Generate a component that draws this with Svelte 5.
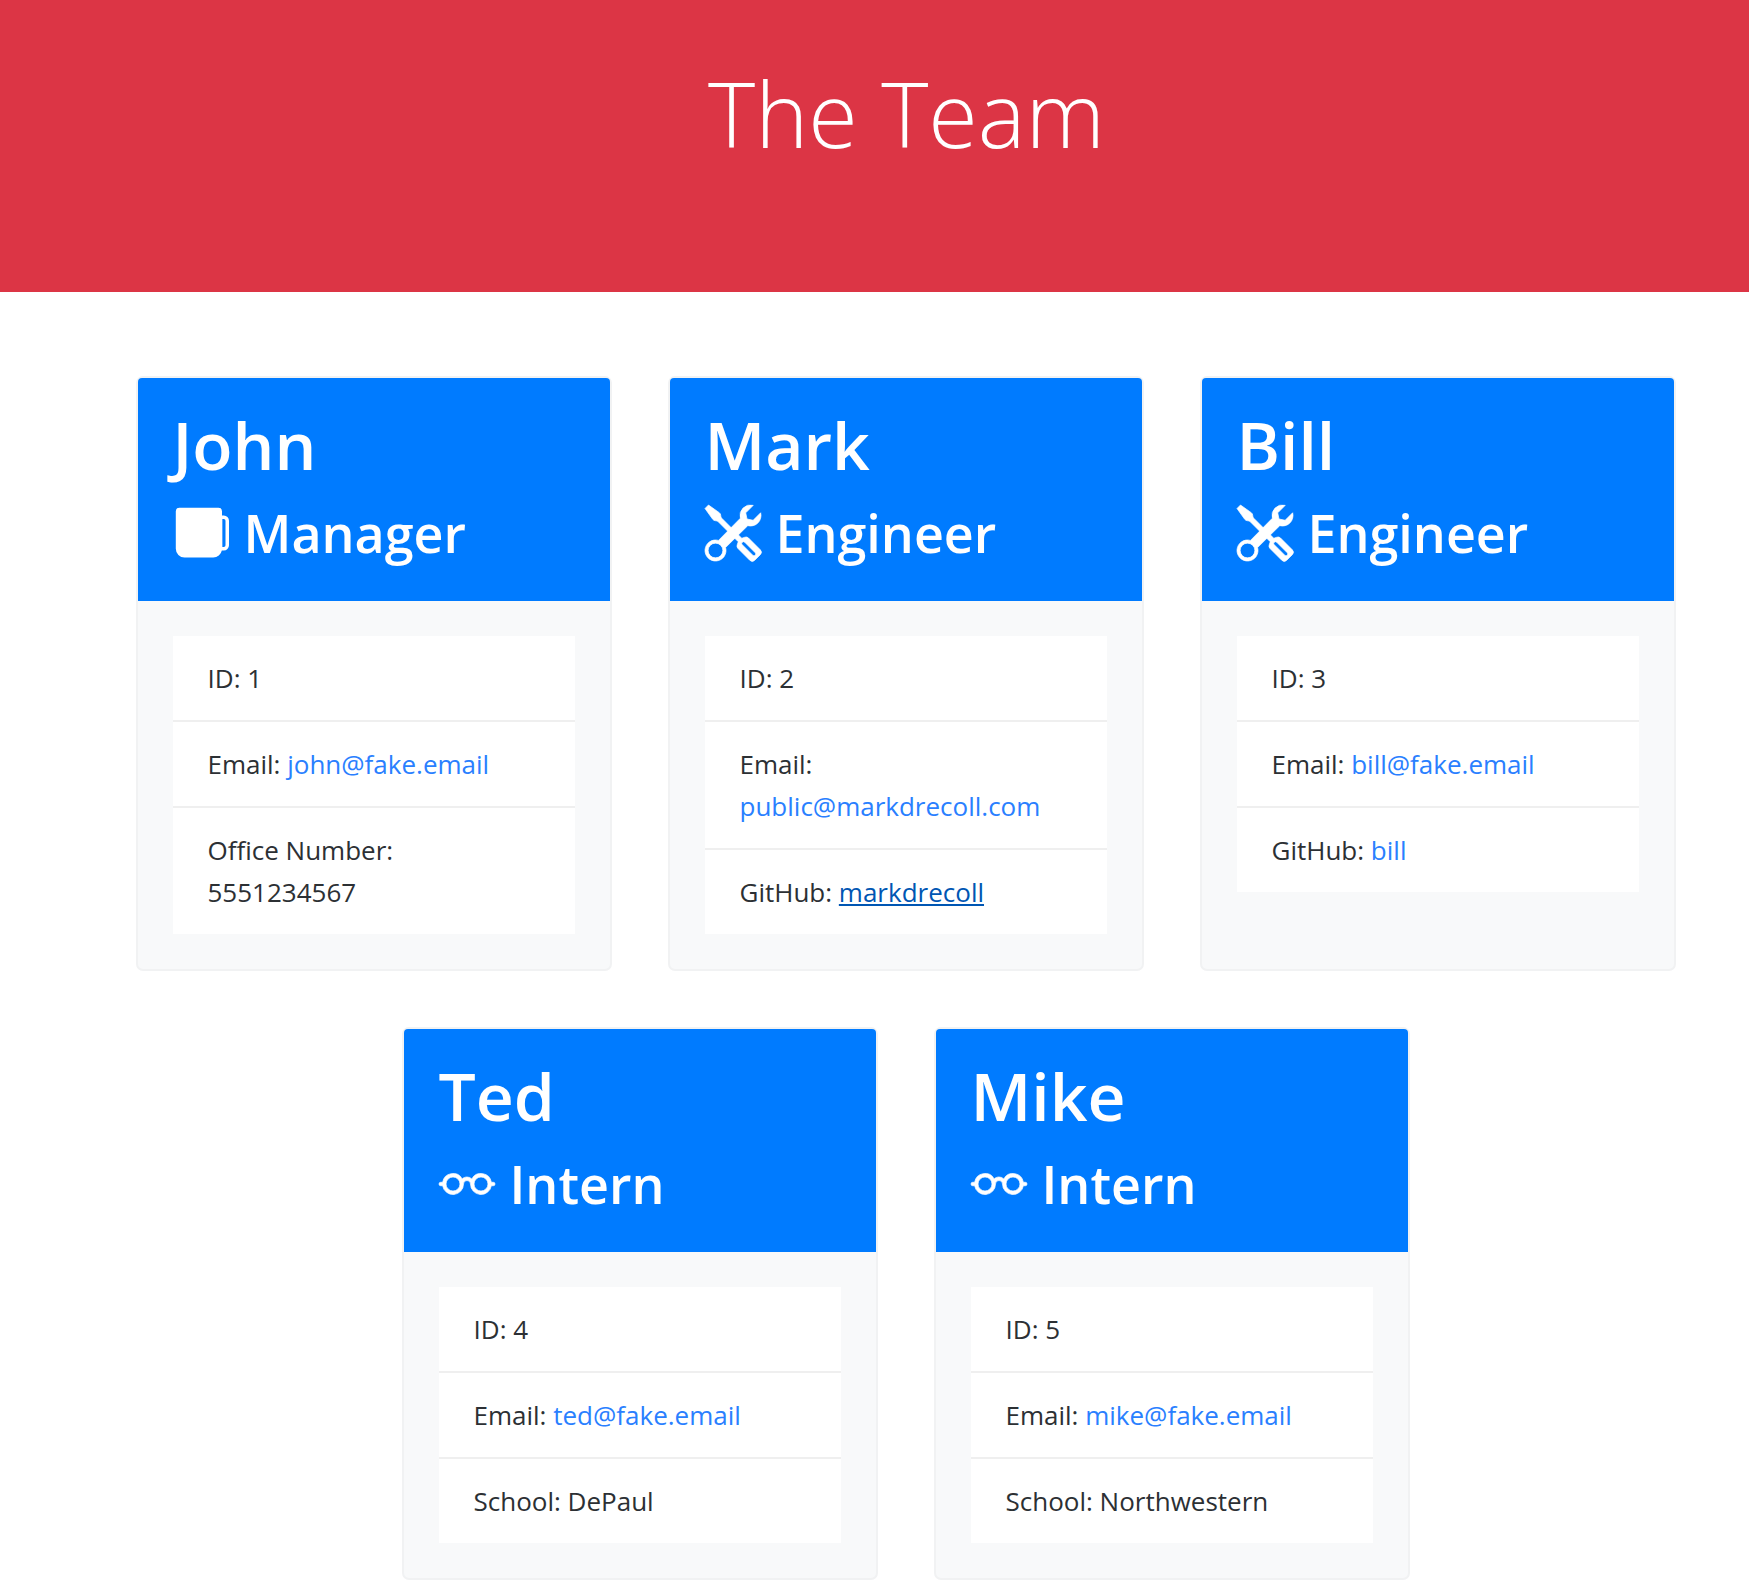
<script>
  const team = [
    { name: 'John', role: 'Manager', icon: 'mug', facts: [
      { label: 'ID', value: '1' },
      { label: 'Email', value: 'john@fake.email', href: 'mailto:john@fake.email' },
      { label: 'Office Number', value: '5551234567' } ] },
    { name: 'Mark', role: 'Engineer', icon: 'tools', facts: [
      { label: 'ID', value: '2' },
      { label: 'Email', value: 'public@markdrecoll.com', href: 'mailto:public@markdrecoll.com' },
      { label: 'GitHub', value: 'markdrecoll', href: '#markdrecoll', active: true } ] },
    { name: 'Bill', role: 'Engineer', icon: 'tools', facts: [
      { label: 'ID', value: '3' },
      { label: 'Email', value: 'bill@fake.email', href: 'mailto:bill@fake.email' },
      { label: 'GitHub', value: 'bill', href: '#bill' } ] },
    { name: 'Ted', role: 'Intern', icon: 'glasses', facts: [
      { label: 'ID', value: '4' },
      { label: 'Email', value: 'ted@fake.email', href: 'mailto:ted@fake.email' },
      { label: 'School', value: 'DePaul' } ] },
    { name: 'Mike', role: 'Intern', icon: 'glasses', facts: [
      { label: 'ID', value: '5' },
      { label: 'Email', value: 'mike@fake.email', href: 'mailto:mike@fake.email' },
      { label: 'School', value: 'Northwestern' } ] }
  ];
</script>

<div class="page">
  <header class="banner">
    <h1>The Team</h1>
  </header>

  <main class="team">
    {#each team as person}
      <article class="card">
        <div class="card-head">
          <h2>{person.name}</h2>
          <h3>
            <svg class="icon" viewBox="0 0 16 16" fill="currentColor" aria-hidden="true">
              {#if person.icon === 'mug'}
                <path d="M.8 1.800a1 1 0 0 1 1-1h11.200a1 1 0 0 1 1 1V3h.5A1.500 1.500 0 0 1 16 4.500v7a1.500 1.500 0 0 1-1.500 1.500h-.55a2.500 2.500 0 0 1-2.450 2h-8.200A2.500 2.500 0 0 1 .8 12.500V1.800zM14.100 12h.4a.5.5 0 0 0 .5-.5v-7a.5.5 0 0 0-.5-.5h-.4v8z" />
              {:else if person.icon === 'tools'}
                <path fill-rule="evenodd" stroke="currentColor" stroke-width=".2" d="M0 1l1-1 3.081 2.200a1 1 0 0 1 .419.815v.070a1 1 0 0 0 .293.708L10.500 9.500l.914-.305a1 1 0 0 1 1.023.242l3.356 3.356a1 1 0 0 1 0 1.414l-1.586 1.586a1 1 0 0 1-1.414 0l-3.356-3.356a1 1 0 0 1-.242-1.023L9.500 10.500 3.793 4.793a1 1 0 0 0-.707-.293h-.071a1 1 0 0 1-.814-.419L0 1zm11.354 9.646a.5.5 0 0 0-.708.708l3 3a.5.5 0 0 0 .708-.708l-3-3z" />
                <path fill-rule="evenodd" stroke="currentColor" stroke-width=".2" d="M15.898 2.223a3.003 3.003 0 0 1-3.679 3.674L5.878 12.150a3 3 0 1 1-2.027-2.027l6.252-6.341A3 3 0 0 1 13.778.1l-2.142 2.142L12 4l1.757.364 2.141-2.141zM3 10.900a2.100 2.100 0 1 0 0 4.200 2.100 2.100 0 0 0 0-4.200z" />
              {:else}
                <path fill-rule="evenodd" stroke="currentColor" stroke-width=".2" d="M4 6a2 2 0 1 1 0 4 2 2 0 0 1 0-4zm2.625.547a3 3 0 0 0-5.584.953H.5a.5.5 0 0 0 0 1h.541A3 3 0 0 0 7 8a1 1 0 0 1 2 0 3 3 0 0 0 5.959.5h.541a.5.5 0 0 0 0-1h-.541a3 3 0 0 0-5.584-.953A1.993 1.993 0 0 0 8 6c-.532 0-1.016.208-1.375.547zM14 8a2 2 0 1 1-4 0 2 2 0 0 1 4 0z" />
              {/if}
            </svg>
            <span>{person.role}</span>
          </h3>
        </div>
        <div class="card-body">
          <ul>
            {#each person.facts as fact}
              <li>{fact.label}: {#if fact.href}<a href={fact.href} class:active={fact.active}>{fact.value}</a>{:else}{fact.value}{/if}</li>
            {/each}
          </ul>
        </div>
      </article>
    {/each}
  </main>
</div>

<style>
  :global(body) {
    margin: 0;
    background: #fff;
  }

  .page {
    font-family: 'Open Sans', 'Noto Sans', sans-serif;
    font-size: 26px;
    line-height: 42px;
    color: #2c3034;
  }

  h1, h2, h3, ul {
    margin: 0;
    padding: 0;
  }

  .banner {
    padding: 54px 0 120px 64px;
    background: #dc3545;
    color: #fff;
    text-align: center;
  }

  h1 {
    font-size: 90px;
    font-weight: 300;
    line-height: 118px;
  }

  .team {
    display: flex;
    flex-wrap: wrap;
    justify-content: center;
    gap: 56px;
    padding: 84px 0 4px 62px;
  }

  .card {
    box-sizing: border-box;
    display: flex;
    flex-direction: column;
    width: 476px;
    border: 2px solid #f1f2f3;
    border-radius: 7px;
    background: #f8f9fa;
  }

  .card-head {
    padding: 24px 35px 34px;
    border-radius: 4px 4px 0 0;
    background: #007bff;
    color: #fff;
  }

  h2 {
    margin-bottom: 13px;
    font-size: 66px;
    font-weight: 600;
    line-height: 84px;
  }

  h3 {
    display: flex;
    align-items: center;
    gap: 15px;
    font-size: 52px;
    font-weight: 600;
    line-height: 68px;
  }

  .icon {
    flex: none;
    width: 56px;
    height: 56px;
    overflow: visible;
  }

  .card-body {
    padding: 35px;
  }

  ul {
    list-style: none;
    background: #fff;
  }

  li {
    padding: 21px 35px;
  }

  li + li {
    border-top: 2px solid #efefef;
  }

  a {
    color: #2a7fff;
    text-decoration: none;
  }

  a.active {
    color: #0056b3;
    text-decoration: underline;
  }
</style>
